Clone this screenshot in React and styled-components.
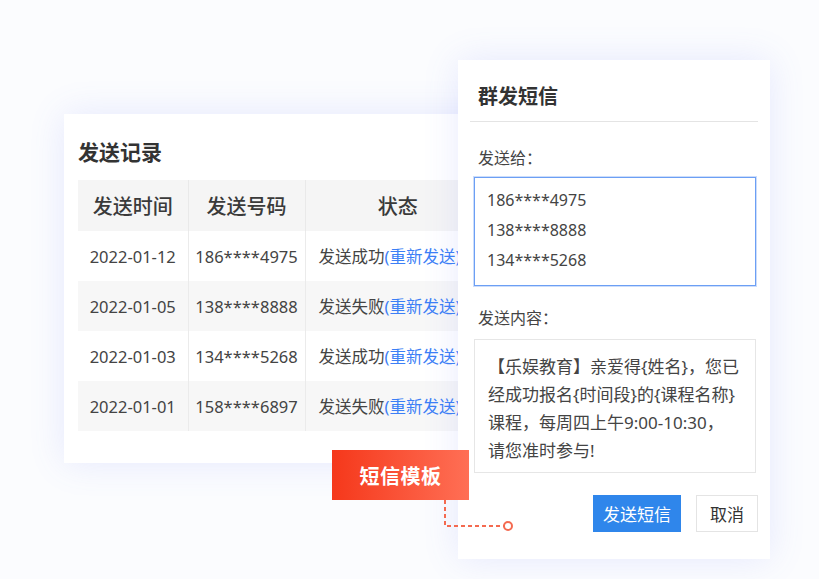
import React from "react";
import styled, { createGlobalStyle } from "styled-components";

const GlobalStyle = createGlobalStyle`
  html, body { margin: 0; padding: 0; }
  body {
    background: #fbfcfe;
    font-family: "Noto Sans", "Noto Sans CJK SC", sans-serif;
    color: #444;
  }
  * { box-sizing: border-box; }
`;

const Stage = styled.div`
  position: relative;
  width: 819px;
  height: 579px;
  overflow: hidden;
  background: #fbfcfe;
  padding: 114px 0 0 64px;
`;

const cardShadow = `0 0 34px rgba(96, 116, 250, 0.14)`;

const RecordCard = styled.section`
  width: 440px;
  height: 349px;
  background: #fff;
  box-shadow: ${cardShadow};
  padding: 23px 14px 0 14px;
`;

const CardTitle = styled.h2`
  margin: 0 0 13px;
  padding-left: 0;
  font-size: 21px;
  line-height: 30px;
  font-weight: 700;
  color: #333;
`;

const Table = styled.table`
  border-collapse: collapse;
  table-layout: fixed;
  width: 412px;
`;

const HeadCell = styled.th`
  height: 51px;
  padding: 0;
  background: #f5f5f5;
  font-size: 20px;
  font-weight: 500;
  color: #3a3a3a;
  text-align: center;
  border-left: ${(p) => (p.$first ? "none" : "1px solid #e9e9e9")};
  width: ${(p) => p.$w || "auto"};
`;

const Row = styled.tr`
  background: ${(p) => (p.$alt ? "#f7f7f7" : "#ffffff")};
`;

const Cell = styled.td`
  height: 50px;
  padding: 0;
  font-size: 16.5px;
  color: #444;
  text-align: ${(p) => (p.$left ? "left" : "center")};
  padding-left: ${(p) => (p.$left ? "13px" : "0")};
  white-space: nowrap;
  overflow: hidden;
  border-left: ${(p) => (p.$first ? "none" : "1px solid #ebebeb")};
`;

const Link = styled.span`
  color: #3c7ff6;
`;

const Dialog = styled.section`
  position: absolute;
  left: 458px;
  top: 60px;
  width: 312px;
  height: 499px;
  background: #fff;
  box-shadow: ${cardShadow};
  padding: 23px 12px 0 12px;
  display: flex;
  flex-direction: column;
`;

const DialogTitle = styled.h3`
  margin: 0;
  padding: 0 0 10px 8px;
  font-size: 20px;
  line-height: 28px;
  font-weight: 700;
  color: #333;
  border-bottom: 1px solid #e4e4e4;
`;

const Label = styled.div`
  margin: ${(p) => p.$top}px 0 ${(p) => p.$bottom}px 8px;
  font-size: 16px;
  line-height: 24px;
  color: #444;
`;

const Box = styled.div`
  margin: 0 2px 0 4px;
  height: ${(p) => p.$h}px;
  border: 1px solid ${(p) => (p.$focus ? "#6c9ff4" : "#e6e6e6")};
  box-shadow: ${(p) => (p.$focus ? "0 0 0 1px rgba(108,159,244,0.35)" : "none")};
  padding: ${(p) => p.$pad};
  font-size: ${(p) => p.$fs || 16}px;
  line-height: ${(p) => p.$lh}px;
  color: #444;
  overflow: hidden;
`;

const Line = styled.div`
  white-space: nowrap;
`;

const Actions = styled.div`
  margin-top: 22px;
  display: flex;
  justify-content: flex-end;
  gap: 15px;
`;

const Button = styled.button`
  height: 37px;
  padding: 0;
  width: ${(p) => (p.$primary ? "88px" : "62px")};
  font-family: inherit;
  font-size: 17px;
  border: 1px solid ${(p) => (p.$primary ? "#2f86eb" : "#e4e4e4")};
  background: ${(p) => (p.$primary ? "#2f86eb" : "#fff")};
  color: ${(p) => (p.$primary ? "#fff" : "#333")};
  cursor: pointer;
`;

const Badge = styled.div`
  position: absolute;
  left: 332px;
  top: 450px;
  width: 137px;
  height: 50px;
  display: flex;
  align-items: center;
  justify-content: center;
  background: linear-gradient(90deg, #f5381b 0%, #ff6f55 100%);
  color: #fff;
  font-size: 20px;
  font-weight: 700;
  letter-spacing: 0.5px;
`;

const Connector = styled.svg`
  position: absolute;
  left: 440px;
  top: 500px;
  overflow: visible;
`;

const records = [
  { date: "2022-01-12", phone: "186****4975", status: "发送成功" },
  { date: "2022-01-05", phone: "138****8888", status: "发送失败" },
  { date: "2022-01-03", phone: "134****5268", status: "发送成功" },
  { date: "2022-01-01", phone: "158****6897", status: "发送失败" },
];

export default function App() {
  return (
    <>
      <GlobalStyle />
      <Stage>
        <RecordCard>
          <CardTitle>发送记录</CardTitle>
          <Table>
            <thead>
              <tr>
                <HeadCell $first $w="110px">发送时间</HeadCell>
                <HeadCell $w="117px">发送号码</HeadCell>
                <HeadCell>状态</HeadCell>
              </tr>
            </thead>
            <tbody>
              {records.map((r, i) => (
                <Row key={r.date} $alt={i % 2 === 1}>
                  <Cell $first>{r.date}</Cell>
                  <Cell>{r.phone}</Cell>
                  <Cell $left>
                    {r.status}
                    <Link>(重新发送)</Link>
                  </Cell>
                </Row>
              ))}
            </tbody>
          </Table>
        </RecordCard>

        <Dialog>
          <DialogTitle>群发短信</DialogTitle>
          <Label $top={24} $bottom={7}>发送给：</Label>
          <Box $focus $h={109} $lh={30} $pad="7px 12px">
            <Line>186****4975</Line>
            <Line>138****8888</Line>
            <Line>134****5268</Line>
          </Box>
          <Label $top={20} $bottom={9}>发送内容：</Label>
          <Box $h={134} $lh={28} $fs={17} $pad="13px 6px 0 13px">
            <Line>【乐娱教育】亲爱得{"{姓名}"}，您已</Line>
            <Line>经成功报名{"{时间段}"}的{"{课程名称}"}</Line>
            <Line>课程，每周四上午9:00-10:30，</Line>
            <Line>请您准时参与!</Line>
          </Box>
          <Actions>
            <Button $primary>发送短信</Button>
            <Button>取消</Button>
          </Actions>
        </Dialog>

        <Badge>短信模板</Badge>
        <Connector width="80" height="34" viewBox="0 0 80 34">
          <path
            d="M5 0 V26 H64"
            fill="none"
            stroke="#f46a50"
            strokeWidth="2"
            strokeDasharray="4 3"
          />
          <circle cx="68" cy="26" r="4" fill="#fff" stroke="#f46a50" strokeWidth="2" />
        </Connector>
      </Stage>
    </>
  );
}
